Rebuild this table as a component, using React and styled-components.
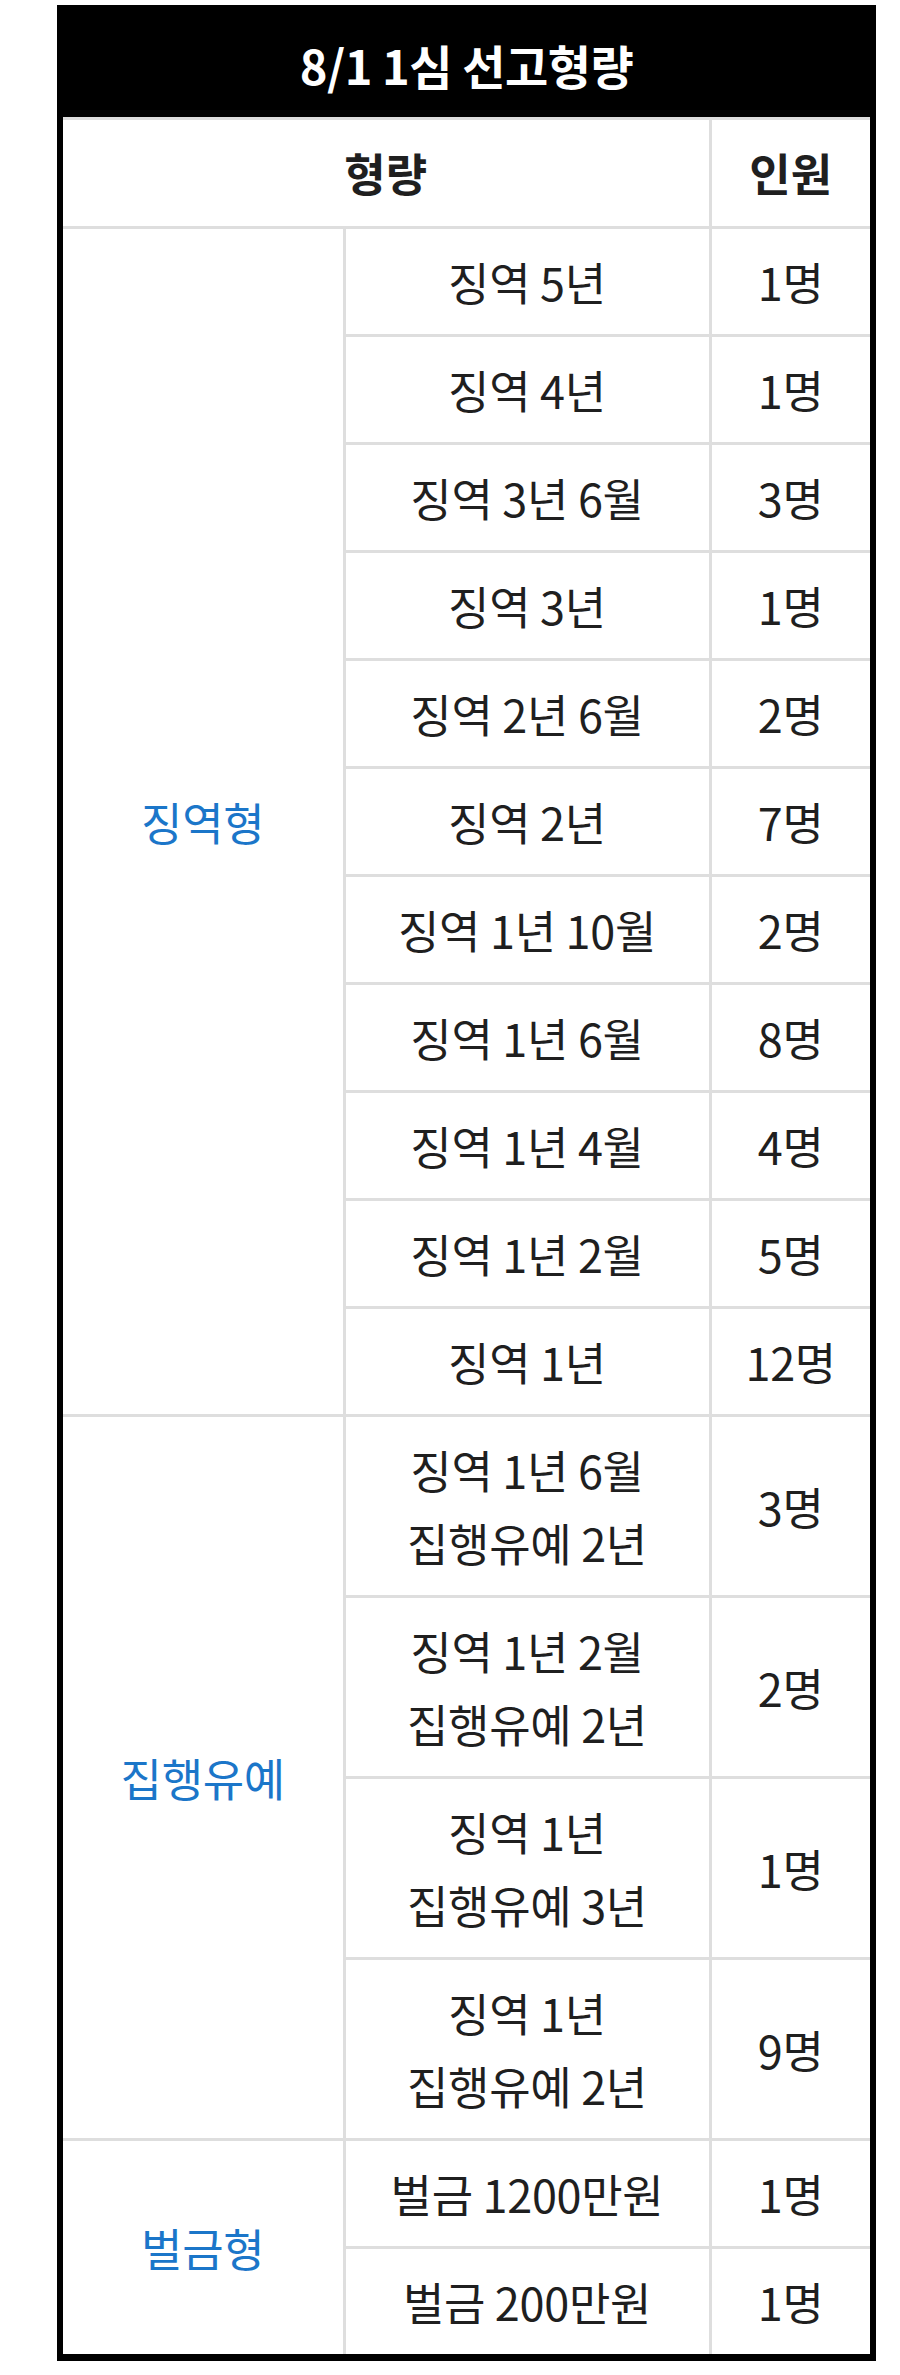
import React from 'react';
import styled, { createGlobalStyle } from 'styled-components';

const GlobalStyle = createGlobalStyle`
  html, body {
    margin: 0;
    padding: 0;
    background: #ffffff;
  }
  body {
    font-family: "Noto Sans CJK KR", "Noto Sans", sans-serif;
  }
`;

const Page = styled.div`
  padding: 5px 24px 10px 57px;
`;

const Table = styled.table`
  width: 819px;
  table-layout: fixed;
  border-collapse: collapse;
  border: 6px solid #000;
  border-bottom-width: 7px;
  font-size: 45px;
  color: #1f1f1f;
`;

const TitleCell = styled.th`
  background: #000;
  color: #fff;
  font-weight: 700;
  font-size: 47px;
  height: 106px;
  padding: 0;
  line-height: 1;
  letter-spacing: -0.5px;
  text-align: center;
`;

const HeadCell = styled.th`
  border: 3px solid #dedede;
  font-weight: 700;
  color: #1f1f1f;
  padding: 16px 8px 17px;
  line-height: 73px;
  text-align: center;
`;

const Cell = styled.td`
  border: 3px solid #dedede;
  padding: 16px 4px;
  line-height: 73px;
  text-align: center;
  vertical-align: middle;
  font-weight: 400;
  letter-spacing: -0.3px;
  color: ${p => (p.$group ? '#1b76c9' : '#1f1f1f')};
`;

const groups = [
  {
    name: '징역형',
    rows: [
      ['징역 5년', '1명'],
      ['징역 4년', '1명'],
      ['징역 3년 6월', '3명'],
      ['징역 3년', '1명'],
      ['징역 2년 6월', '2명'],
      ['징역 2년', '7명'],
      ['징역 1년 10월', '2명'],
      ['징역 1년 6월', '8명'],
      ['징역 1년 4월', '4명'],
      ['징역 1년 2월', '5명'],
      ['징역 1년', '12명'],
    ],
  },
  {
    name: '집행유예',
    rows: [
      [['징역 1년 6월', '집행유예 2년'], '3명'],
      [['징역 1년 2월', '집행유예 2년'], '2명'],
      [['징역 1년', '집행유예 3년'], '1명'],
      [['징역 1년', '집행유예 2년'], '9명'],
    ],
  },
  {
    name: '벌금형',
    rows: [
      ['벌금 1200만원', '1명'],
      ['벌금 200만원', '1명'],
    ],
  },
];

const Sentence = ({ text }) =>
  Array.isArray(text) ? (
    <>
      {text[0]}
      <br />
      {text[1]}
    </>
  ) : (
    text
  );

export default function App() {
  return (
    <Page>
      <GlobalStyle />
      <Table>
        <colgroup>
          <col style={{ width: 284 }} />
          <col style={{ width: 366 }} />
          <col />
        </colgroup>
        <thead>
          <tr>
            <TitleCell colSpan={3}>8/1 1심 선고형량</TitleCell>
          </tr>
          <tr>
            <HeadCell colSpan={2}>형량</HeadCell>
            <HeadCell>인원</HeadCell>
          </tr>
        </thead>
        <tbody>
          {groups.map(g =>
            g.rows.map((r, i) => (
              <tr key={g.name + i}>
                {i === 0 && (
                  <Cell $group rowSpan={g.rows.length}>
                    {g.name}
                  </Cell>
                )}
                <Cell>
                  <Sentence text={r[0]} />
                </Cell>
                <Cell>{r[1]}</Cell>
              </tr>
            ))
          )}
        </tbody>
      </Table>
    </Page>
  );
}
